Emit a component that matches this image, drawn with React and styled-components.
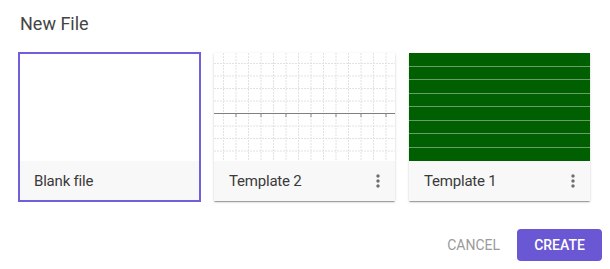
import React from "react";
import styled, { createGlobalStyle } from "styled-components";
import { MdMoreVert } from "react-icons/md";

const Global = createGlobalStyle`
  html, body { margin: 0; padding: 0; background: #fff; }
  body { font-family: Roboto, "Liberation Sans", sans-serif; }
`;

const Dialog = styled.div`
  width: 610px;
  height: 269px;
  box-sizing: border-box;
  display: flex;
  flex-direction: column;
`;

const Title = styled.h2`
  margin: 12px 0 0 20px;
  font-size: 18px;
  line-height: 24px;
  font-weight: 400;
  color: #444;
`;

const CardRow = styled.div`
  display: flex;
  gap: 14px;
  margin-top: 17px;
  padding-left: 19px;
`;

const Card = styled.div`
  width: 181px;
  height: 148px;
  display: flex;
  flex-direction: column;
  background: #fff;
  box-shadow: ${(p) =>
    p.$selected
      ? "none"
      : "0 2px 1px -1px rgba(0,0,0,.2), 0 1px 1px 0 rgba(0,0,0,.14), 0 1px 3px 0 rgba(0,0,0,.12)"};
  outline: ${(p) => (p.$selected ? "2px solid #6e5fdc" : "none")};
  outline-offset: -1px;
`;

const Preview = styled.div`
  height: 108px;
  background: ${(p) => p.$bg || "#fff"};
  overflow: hidden;
  svg { display: block; }
`;

const CardFooter = styled.div`
  flex: 1;
  display: flex;
  align-items: center;
  justify-content: space-between;
  background: #f8f8f8;
  padding: 0 7px 0 15px;
`;

const CardName = styled.span`
  font-size: 15px;
  letter-spacing: -0.2px;
  color: #3a3a3a;
`;

const MenuIcon = styled(MdMoreVert)`
  color: #6f6f6f;
  width: 20px;
  height: 20px;
`;

const Actions = styled.div`
  display: flex;
  justify-content: flex-end;
  align-items: center;
  gap: 9px;
  margin-top: 28px;
  padding-right: 8px;
`;

const Button = styled.button`
  height: 32px;
  border: none;
  border-radius: 4px;
  font-family: Roboto, "Liberation Sans", sans-serif;
  font-size: 14px;
  font-weight: ${(p) => (p.$primary ? 500 : 400)};
  text-transform: uppercase;
  padding: 0 ${(p) => (p.$primary ? "16px" : "8px")};
  min-width: ${(p) => (p.$primary ? "85px" : "0")};
  background: ${(p) => (p.$primary ? "#6a57d3" : "transparent")};
  color: ${(p) => (p.$primary ? "#fff" : "#9a9a9a")};
  cursor: pointer;
`;

const GridPreview = () => {
  const vs = [];
  for (let i = 0; i < 15; i++) vs.push(9.5 + i * 12.5);
  const hs = [];
  for (let i = 0; i < 9; i++) hs.push(10.5 + i * 12.5);
  const ticks = [];
  for (let i = 0; i < 7; i++) ticks.push(22 + i * 25);
  return (
    <svg width="181" height="108" viewBox="0 0 181 108">
      {vs.map((x) => (
        <line key={"v" + x} x1={x} y1="0" x2={x} y2="108" stroke="#e2e2e2" strokeWidth="1" strokeDasharray="2 1" />
      ))}
      {hs.map((y) => (
        <line key={"h" + y} x1="0" y1={y} x2="181" y2={y} stroke="#e2e2e2" strokeWidth="1" strokeDasharray="2 1" />
      ))}
      <line x1="0" y1="60.5" x2="181" y2="60.5" stroke="#808080" strokeWidth="1" />
      {ticks.map((x) => (
        <line key={"t" + x} x1={x} y1="61" x2={x} y2="64" stroke="#888" strokeWidth="1" />
      ))}
    </svg>
  );
};

const LinesPreview = () => {
  const ys = [];
  for (let i = 1; i < 8; i++) ys.push(Math.round(i * 13.5) - 0.5);
  return (
    <svg width="181" height="108" viewBox="0 0 181 108">
      {ys.map((y) => (
        <line key={y} x1="0" y1={y} x2="181" y2={y} stroke="#6a9c6a" strokeWidth="1.2" />
      ))}
    </svg>
  );
};

export default function App() {
  return (
    <>
      <Global />
      <Dialog>
        <Title>New File</Title>
        <CardRow>
          <Card $selected>
            <Preview />
            <CardFooter>
              <CardName>Blank file</CardName>
            </CardFooter>
          </Card>
          <Card>
            <Preview>
              <GridPreview />
            </Preview>
            <CardFooter>
              <CardName>Template 2</CardName>
              <MenuIcon />
            </CardFooter>
          </Card>
          <Card>
            <Preview $bg="#005f00">
              <LinesPreview />
            </Preview>
            <CardFooter>
              <CardName>Template 1</CardName>
              <MenuIcon />
            </CardFooter>
          </Card>
        </CardRow>
        <Actions>
          <Button>Cancel</Button>
          <Button $primary>Create</Button>
        </Actions>
      </Dialog>
    </>
  );
}
